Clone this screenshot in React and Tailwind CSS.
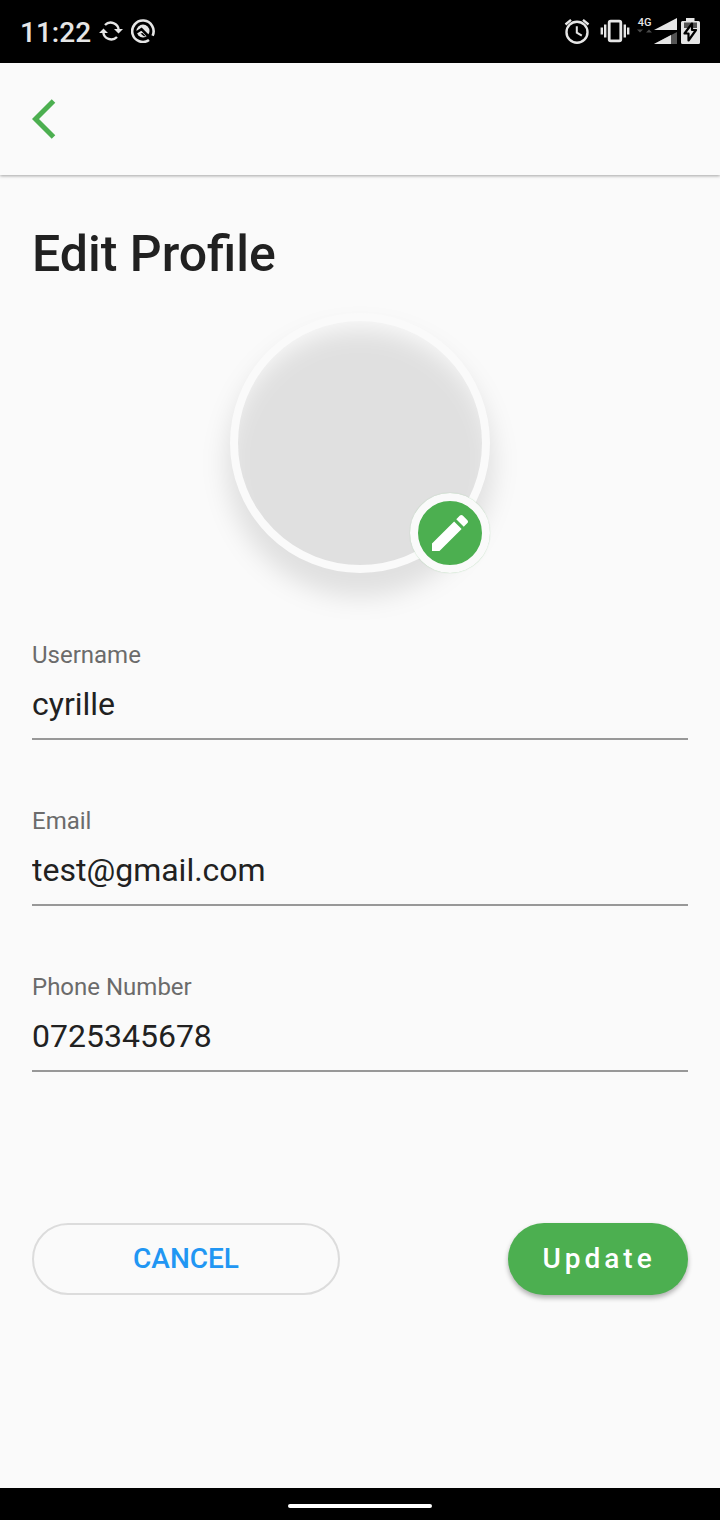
function StatusBar() {
  return (
    <header className="flex h-[63px] shrink-0 items-center justify-between bg-black px-5 pb-0.5 text-[#e6e6e6]">
      <div className="flex items-center gap-2">
        <time className="mt-1 text-[28px] leading-8 font-medium">11:22</time>
        <svg className="size-6" viewBox="0 0 24 24" fill="none" stroke="currentColor" strokeWidth="2.400" role="img" aria-label="Syncing">
          <path d="M6 6A8 8 0 0 1 19.700 11M18 18A8 8 0 0 1 4.300 13" />
          <path d="M15 10H24L19.500 14.500zM0 14H9L4.500 9.500z" fill="currentColor" stroke="none" />
        </svg>
        <svg className="size-6" viewBox="0 0 24 24" fill="none" role="img" aria-label="App notification">
          <path d="M18 21A10.700 10.700 0 1 1 21.600 16.700" stroke="currentColor" strokeWidth="2.600" />
          <circle cx="12" cy="12" r="6.500" fill="currentColor" />
          <path d="M4.500 14L10.500 10.200L21 21" stroke="black" strokeWidth="2.600" />
          <path d="M9.500 14.500L11.500 14L15 17.500L12.500 17z" fill="black" />
        </svg>
      </div>
      <div className="flex items-center">
        <svg className="mr-2 size-7" viewBox="0 0 28 28" fill="none" stroke="currentColor" role="img" aria-label="Alarm set">
          <circle cx="14" cy="15.200" r="10.500" strokeWidth="2.400" />
          <path d="M13.800 9.200V15.700L18.800 18.700" strokeWidth="2" />
          <path d="M2.500 7.500L8 2.900M25.500 7.500L20 2.900" strokeWidth="2.400" />
        </svg>
        <svg className="mr-1 h-7 w-8" viewBox="0 0 32 28" fill="none" stroke="currentColor" strokeWidth="2.400" role="img" aria-label="Vibrate">
          <rect x="10.200" y="4.200" width="11.600" height="19.600" rx="1.500" strokeWidth="2.800" />
          <path d="M2.800 10.500V17.500M6.200 7.500V20.500M25.800 7.500V20.500M29.200 10.500V17.500" />
        </svg>
        <div className="flex h-7 w-[19px] flex-col items-center">
          <span className="text-[11px] leading-3 font-medium">4G</span>
          <svg className="h-1 w-4" viewBox="0 0 16 4" fill="#4a4a4a" aria-hidden="true">
            <path d="M0 .5H6L3 3.500zM9 3.500H15L12 .5z" />
          </svg>
        </div>
        <svg className="mr-0.5 h-7 w-6" viewBox="0 0 24 28" role="img" aria-label="Mobile signal">
          <path d="M0 13L23 1V13z" fill="currentColor" />
          <path d="M0 27L23 15V27z" fill="#555" />
          <path d="M0 27L17 18V27z" fill="currentColor" />
        </svg>
        <svg className="h-7 w-5" viewBox="0 0 20 28" role="img" aria-label="Battery charging">
          <path d="M6 1H14.500V4H18.500Q20 4 20 5.500V25.500Q20 27 18.500 27H2.500Q1 27 1 25.500V5.500Q1 4 2.500 4H6z" fill="currentColor" />
          <path d="M4 5.500H17V11H4z" fill="#555" />
          <path d="M12 6.500L4.500 16.500H8.500V23.500L16 13H12z" fill="currentColor" stroke="black" strokeWidth="2.200" strokeLinejoin="round" />
        </svg>
      </div>
    </header>
  );
}

function Field({ id, label, type, value }) {
  return (
    <div className="flex flex-col border-b-2 border-[#989898] pb-4">
      <label htmlFor={id} className="text-2xl leading-6 text-[#6b6b6b]">
        {label}
      </label>
      <input
        id={id}
        type={type}
        defaultValue={value}
        className="mt-[19px] h-9 w-full bg-transparent p-0 text-[32px] leading-9 text-[#212121] outline-none"
      />
    </div>
  );
}

export default function App() {
  return (
    <div className="flex min-h-screen flex-col bg-[#fafafa] font-[Roboto,sans-serif] text-[#212121]">
      <StatusBar />
      <nav className="flex h-28 shrink-0 items-center px-8 shadow-[0_1px_3px_rgba(0,0,0,0.35)]">
        <button type="button" aria-label="Back" className="text-[#4caf50]">
          <svg className="h-10 w-6" viewBox="0 0 24 40" fill="none" stroke="currentColor" strokeWidth="5">
            <path d="M21.500 2L3.500 20L21.500 38" />
          </svg>
        </button>
      </nav>
      <main className="flex grow flex-col px-8 pt-[50px]">
        <h1 className="text-[50px] leading-[58px] font-medium">Edit Profile</h1>
        <div className="relative isolate mt-[30px] size-[260px] self-center">
          <div className="absolute -inset-1 -z-10 translate-y-5 rounded-full bg-black/10 blur-[12px]" />
          <div className="size-full rounded-full border-8 border-[#fafafa]" />
          <button
            type="button"
            aria-label="Change photo"
            className="absolute right-0 bottom-0 flex size-20 items-center justify-center rounded-full border-8 border-[#fafafa] bg-[#4caf50] text-white shadow-[0_0_1px_rgba(76,175,80,0.5)]"
          >
            <svg className="size-12" viewBox="0 0 24 24" fill="currentColor">
              <path d="M3 17.250V21h3.750L17.810 9.940l-3.750-3.750L3 17.250zM20.710 7.040c.39-.39.39-1.020 0-1.410l-2.340-2.340c-.39-.39-1.020-.39-1.410 0l-1.830 1.830 3.750 3.750 1.830-1.830z" />
            </svg>
          </button>
        </div>
        <form className="mt-[70px] flex flex-col gap-[69px]" onSubmit={(e) => e.preventDefault()}>
          <Field id="username" label="Username" type="text" value="cyrille" />
          <Field id="email" label="Email" type="email" value="test@gmail.com" />
          <Field id="phone" label="Phone Number" type="tel" value="0725345678" />
          <div className="mt-[82px] flex justify-between">
            <button
              type="button"
              className="h-[72px] w-[308px] rounded-full border-2 border-[#dcdcdc] text-[28px] leading-8 font-medium text-[#2196f3]"
            >
              CANCEL
            </button>
            <button
              type="submit"
              className="h-[72px] w-[180px] rounded-full bg-[#4caf50] pl-0.5 text-[28px] leading-8 font-medium tracking-[4px] text-white shadow-[0_3px_5px_rgba(0,0,0,0.3)]"
            >
              Update
            </button>
          </div>
        </form>
      </main>
      <footer className="flex h-8 shrink-0 items-end justify-center bg-black pb-3">
        <div className="h-1 w-36 rounded-full bg-white" />
      </footer>
    </div>
  );
}
